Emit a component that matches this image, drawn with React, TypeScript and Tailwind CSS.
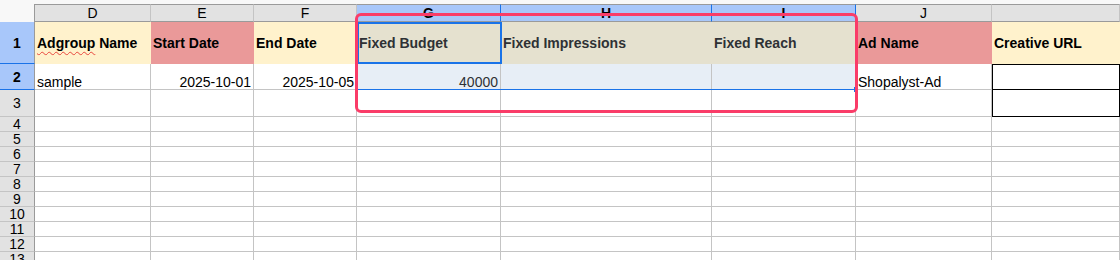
import React from "react";

type Cell = {
  text?: string;
  bg: string;
  align?: string;
  color?: string;
  border?: string;
};

const colLetters = [
  { l: "D", sel: false },
  { l: "E", sel: false },
  { l: "F", sel: false },
  { l: "G", sel: true },
  { l: "H", sel: true },
  { l: "I", sel: true },
  { l: "J", sel: false },
  { l: "", sel: false },
];

const row1: Cell[] = [
  { text: "Adgroup Name", bg: "bg-[#fff2cc]" },
  { text: "Start Date", bg: "bg-[#ea9999]" },
  { text: "End Date", bg: "bg-[#fff2cc]" },
  { text: "Fixed Budget", bg: "bg-[#e5e1cf]", color: "text-[#2e3135]" },
  { text: "Fixed Impressions", bg: "bg-[#e5e1cf]", color: "text-[#2e3135]" },
  { text: "Fixed Reach", bg: "bg-[#e5e1cf]", color: "text-[#2e3135]" },
  { text: "Ad Name", bg: "bg-[#ea9999]" },
  { text: "Creative URL", bg: "bg-[#fff2cc]" },
];

const row2: Cell[] = [
  { text: "sample", bg: "bg-white" },
  { text: "2025-10-01", bg: "bg-white", align: "justify-end" },
  { text: "2025-10-05", bg: "bg-white", align: "justify-end" },
  { text: "40000", bg: "bg-[#e7eef6]", align: "justify-end", color: "text-[#2e3135]" },
  { bg: "bg-[#e7eef6]" },
  { bg: "bg-[#e7eef6]" },
  { text: "Shopalyst-Ad", bg: "bg-white" },
  { bg: "bg-white", border: "border border-black" },
];

const emptyRows = [3, 4, 5, 6, 7, 8, 9, 10, 11, 12, 13];

function RowHead({ n, sel }: { n: number; sel: boolean }) {
  return (
    <div
      className={
        sel
          ? "flex items-center justify-center bg-[#a8c7fa] border-r border-r-[#9a9a9a] border-b border-b-[#1a73e8] font-bold text-[14px] leading-none"
          : "flex items-center justify-center bg-[#e2e2e2] border-r border-r-[#9a9a9a] border-b border-b-[#c4c4c4] text-[14px] leading-none"
      }
    >
      {n}
    </div>
  );
}

export default function App() {
  return (
    <div
      className="relative w-[1120px] h-[260px] overflow-hidden bg-white text-black"
      style={{ fontFamily: '"Liberation Sans", Arial, sans-serif' }}
    >
      <div className="h-[4px] bg-[#f8f8f8]" />
      <div className="grid grid-cols-[35px_116px_103px_103px_144px_211px_144px_136px_128px] grid-rows-[18px_42px_26px_27px_repeat(10,15px)]">
        {/* column header */}
        <div className="bg-[#f8f8f8] border-r border-r-[#9a9a9a]" />
        {colLetters.map((c, i) => (
          <div
            key={i}
            className={
              c.sel
                ? "flex items-center justify-center bg-[#a8c7fa] border-t border-t-[#9a9a9a] border-b border-b-[#9a9a9a] border-r border-r-[#1a73e8] font-bold text-[14px]"
                : "flex items-center justify-center bg-[#e2e2e2] border-t border-t-[#9a9a9a] border-b border-b-[#9a9a9a] border-r border-r-[#c4c4c4] text-[14px]"
            }
          >
            {c.l}
          </div>
        ))}

        {/* row 1 */}
        <RowHead n={1} sel />
        {row1.map((c, i) => (
          <div
            key={i}
            className={`flex items-center px-[2px] font-bold text-[14px] whitespace-nowrap overflow-hidden ${c.bg} ${c.color ?? ""} ${
              i === 2 ? "border-r border-r-[#c4c4c4]" : ""
            }`}
          >
            {i === 0 ? (
              <span>
                <span className="underline decoration-wavy decoration-[#e8463c] decoration-1 underline-offset-[3px]">
                  Adgroup
                </span>{" "}
                Name
              </span>
            ) : (
              c.text
            )}
          </div>
        ))}

        {/* row 2 */}
        <RowHead n={2} sel />
        {row2.map((c, i) => (
          <div
            key={i}
            className={`flex items-end px-[2px] text-[14px] leading-[14px] whitespace-nowrap ${c.bg} ${c.color ?? ""} ${c.align ?? ""} ${
              c.border ?? "border-r border-r-[#c4c4c4] border-b border-b-[#c4c4c4]"
            }`}
          >
            {c.text}
          </div>
        ))}

        {/* rows 3.. */}
        {emptyRows.map((n) => (
          <React.Fragment key={n}>
            <RowHead n={n} sel={false} />
            {colLetters.map((c, i) =>
              i === 7 && n === 3 ? (
                <div key={i} className="border-l border-r border-b border-black -mt-px" />
              ) : (
                <div key={i} className="border-r border-r-[#c4c4c4] border-b border-b-[#c4c4c4]" />
              )
            )}
          </React.Fragment>
        ))}
      </div>

      {/* active cell G1 */}
      <div className="absolute left-[357px] top-[22px] w-[145px] h-[42px] border-2 border-[#1a73e8]" />
      {/* selection range bottom edge + handle */}
      <div className="absolute left-[357px] top-[89px] w-[499px] h-px bg-[#1a73e8]" />
      <div className="absolute left-[854px] top-[87px] w-[4px] h-[5px] bg-[#1a73e8]" />
      {/* highlight box */}
      <div className="absolute left-[355px] top-[13px] w-[503px] h-[100px] border-[3px] border-[#fa3c68] rounded-[6px]" />
    </div>
  );
}
